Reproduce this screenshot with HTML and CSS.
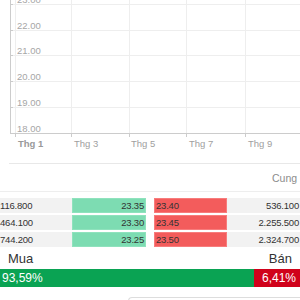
FILE: index.html
```html
<!DOCTYPE html>
<html lang="vi">
<head>
<meta charset="utf-8">
<link rel="stylesheet" href="styles.css">
</head>
<body>
<div class="page">
  <div class="chart-card">
    <svg class="chart" width="300" height="150" viewBox="0 0 300 150">
      <g class="grid">
        <line x1="9" y1="4.5" x2="300" y2="4.5"/>
        <line x1="9" y1="30.5" x2="300" y2="30.5"/>
        <line x1="9" y1="55.5" x2="300" y2="55.5"/>
        <line x1="9" y1="81.5" x2="300" y2="81.5"/>
        <line x1="9" y1="107.5" x2="300" y2="107.5"/>
        <line x1="14.5" y1="0" x2="14.5" y2="133"/>
        <line x1="70.5" y1="0" x2="70.5" y2="133"/>
        <line x1="128.5" y1="0" x2="128.5" y2="133"/>
        <line x1="185.5" y1="0" x2="185.5" y2="133"/>
        <line x1="244.5" y1="0" x2="244.5" y2="133"/>
      </g>
      <g class="axis">
        <line x1="9.5" y1="0" x2="9.5" y2="133.5"/>
        <line x1="9" y1="133.5" x2="300" y2="133.5"/>
        <line x1="9" y1="4.5" x2="12" y2="4.5"/>
        <line x1="9" y1="30.5" x2="12" y2="30.5"/>
        <line x1="9" y1="55.5" x2="12" y2="55.5"/>
        <line x1="9" y1="81.5" x2="12" y2="81.5"/>
        <line x1="9" y1="107.5" x2="12" y2="107.5"/>
        <line x1="14.5" y1="133" x2="14.5" y2="137"/>
        <line x1="70.5" y1="133" x2="70.5" y2="137"/>
        <line x1="128.5" y1="133" x2="128.5" y2="137"/>
        <line x1="185.5" y1="133" x2="185.5" y2="137"/>
        <line x1="244.5" y1="133" x2="244.5" y2="137"/>
      </g>
      <g class="ylabels">
        <text x="16" y="3">23.00</text>
        <text x="16" y="29">22.00</text>
        <text x="16" y="54">21.00</text>
        <text x="16" y="80">20.00</text>
        <text x="16" y="106">19.00</text>
        <text x="16" y="131.5">18.00</text>
      </g>
      <g class="xlabels">
        <text x="17" y="146.5" class="first">Thg 1</text>
        <text x="73" y="146.5">Thg 3</text>
        <text x="130" y="146.5">Thg 5</text>
        <text x="188" y="146.5">Thg 7</text>
        <text x="247" y="146.5">Thg 9</text>
      </g>
    </svg>
    <div class="divider"></div>
    <div class="source">Cung cấp</div>
  </div>

  <div class="book">
    <div class="row">
      <div class="vol buy">116.800</div>
      <div class="bid">23.35</div>
      <div class="spacer"></div>
      <div class="ask">23.40</div>
      <div class="vol sell">536.100</div>
    </div>
    <div class="row">
      <div class="vol buy">464.100</div>
      <div class="bid">23.30</div>
      <div class="spacer"></div>
      <div class="ask">23.45</div>
      <div class="vol sell">2.255.500</div>
    </div>
    <div class="row">
      <div class="vol buy">744.200</div>
      <div class="bid">23.25</div>
      <div class="spacer"></div>
      <div class="ask">23.50</div>
      <div class="vol sell">2.324.700</div>
    </div>
  </div>

  <div class="sides">
    <span>Mua</span>
    <span>Bán</span>
  </div>
  <div class="ratio">
    <div class="ratio-buy">93,59%</div>
    <div class="ratio-sell">6,41%</div>
  </div>
  <div class="next-box"></div>
</div>
</body>
</html>
```

FILE: styles.css
```css
html, body {
  margin: 0;
  padding: 0;
  background: #fff;
}
.page {
  width: 300px;
  height: 300px;
  overflow: hidden;
  font-family: "Liberation Sans", Arial, sans-serif;
  color: #333;
}
.chart-card {
  height: 192px;
  border-left: 1px solid #eeeeee;
  border-bottom: 1px solid #eeeeee;
  box-sizing: border-box;
  margin-left: -1px;
  overflow: hidden;
}
.chart {
  display: block;
  margin-left: 1px;
}
.grid line {
  stroke: #eeeeee;
  stroke-width: 1;
}
.axis line {
  stroke: #cccccc;
  stroke-width: 1;
}
.ylabels text {
  font-family: "Liberation Sans", Arial, sans-serif;
  font-size: 9.5px;
  fill: #a6a6a6;
}
.xlabels text {
  font-family: "Liberation Sans", Arial, sans-serif;
  font-size: 9.5px;
  fill: #a0a0a0;
}
.xlabels .first {
  font-weight: bold;
  fill: #999999;
}
.divider {
  margin: 13px 0 0 9px;
  border-top: 1px solid #e8e8e8;
}
.source {
  padding-left: 272px;
  margin-top: 8px;
  font-size: 10.5px;
  color: #8c8c8c;
  white-space: nowrap;
}
.book {
  margin-top: 6px;
  display: flex;
  flex-direction: column;
  gap: 2px;
}
.row {
  display: grid;
  grid-template-columns: 72px 74px 8px 73px 73px;
  height: 15px;
  font-size: 9.5px;
  line-height: 15px;
  letter-spacing: -0.2px;
}
.vol {
  background: #f2f2f2;
  white-space: nowrap;
  overflow: hidden;
}
.vol.sell {
  text-align: right;
  padding-right: 1px;
}
.bid {
  background: #7ddcb2;
  text-align: right;
  padding-right: 2px;
  box-shadow: inset 0 0 0 1px #8fe2bd;
}
.ask {
  background: #f35c5c;
  padding-left: 2px;
  box-shadow: inset 0 0 0 1px #f77c7c;
}
.sides {
  display: flex;
  justify-content: space-between;
  padding: 0 8px 0 8px;
  height: 22px;
  line-height: 24px;
  font-size: 13px;
  color: #333;
}
.ratio {
  display: flex;
  height: 18px;
  line-height: 18px;
  font-size: 12px;
  color: #fff;
}
.ratio-buy {
  flex: 1;
  background: #0aa353;
  padding-left: 2px;
}
.ratio-sell {
  width: 46px;
  background: #d0021b;
  text-align: right;
  padding-right: 4px;
  box-sizing: border-box;
}
.next-box {
  margin: 10px 0 0 128px;
  height: 10px;
  border: 1px solid #dddddd;
  border-right: none;
  border-radius: 4px 0 0 0;
}
```
